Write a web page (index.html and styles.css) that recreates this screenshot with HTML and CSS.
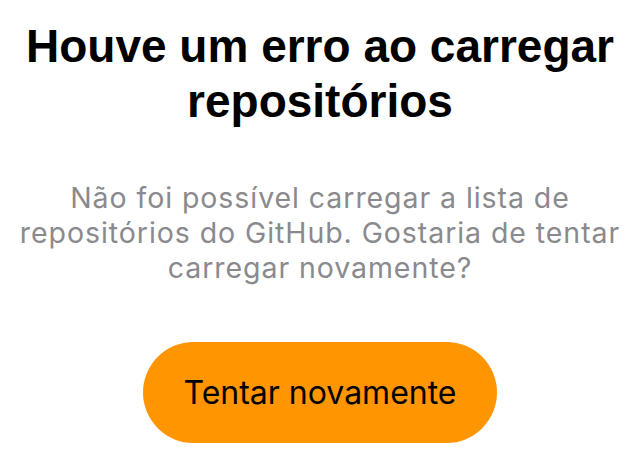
FILE: index.html
```html
<!DOCTYPE html>
<html lang="pt-BR">
<head>
<meta charset="utf-8">
<link rel="stylesheet" href="styles.css">
</head>
<body>
<main class="error">
  <h1 class="error-title">Houve um erro ao carregar repositórios</h1>
  <p class="error-text">Não foi possível carregar a lista de repositórios do GitHub. Gostaria de tentar carregar novamente?</p>
  <button class="retry-btn" type="button">Tentar novamente</button>
</main>
</body>
</html>
```
FILE: styles.css
```css
html, body {
  margin: 0;
  padding: 0;
  background: #ffffff;
}
.error {
  display: flex;
  flex-direction: column;
  align-items: center;
  padding: 19px 8px 0;
  text-align: center;
}
.error-title {
  margin: 0;
  font-family: "Liberation Sans", Arial, sans-serif;
  font-weight: 700;
  font-size: 46px;
  line-height: 55px;
  color: #000;
  max-width: 600px;
}
.error-text {
  margin: 51px 0 0;
  max-width: 616px;
  font-family: Inter, "Noto Sans", sans-serif;
  font-size: 28.5px;
  letter-spacing: 0.93px;
  line-height: 35px;
  color: #8a8a8e;
}
.retry-btn {
  margin-top: 57px;
  width: 354px;
  height: 101px;
  border: none;
  border-radius: 51px;
  background: #ff9500;
  color: #000;
  font-family: Inter, "Noto Sans", sans-serif;
  font-size: 32px;
  padding: 0;
}
```
